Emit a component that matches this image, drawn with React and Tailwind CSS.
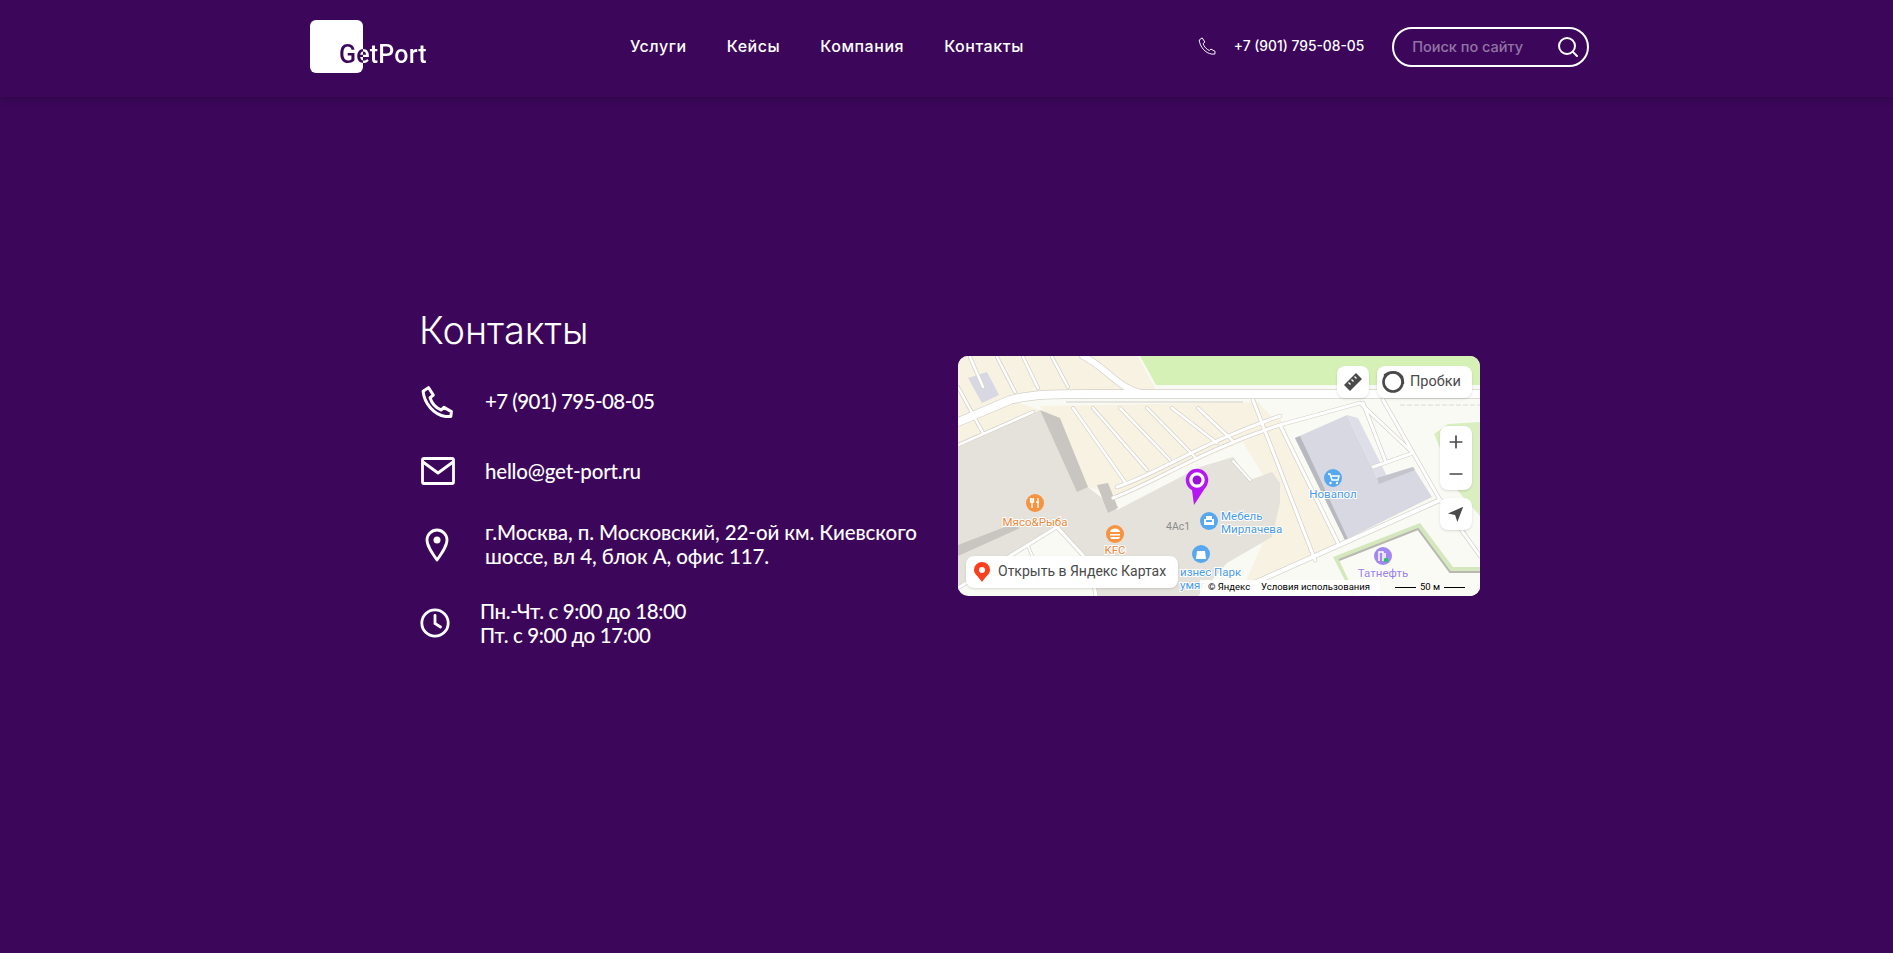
import React from 'react';
import { Search, Plus, Minus } from 'lucide-react';

const navLinks = ['Услуги', 'Кейсы', 'Компания', 'Контакты'];

// дороги: [путь, толщина]
const roads = [
  ['M0 66 L52 44 C75 38 100 38 130 38 L522 38', 8],
  ['M125 0 C150 12 160 35 190 38', 6],
  ['M0 89 L75 56', 2.5],
  ['M155 142 C200 125 242 95 322 69 L402 47 L455 97 L415 111', 3],
  ['M159 131 C200 118 240 88 322 60', 3],
  ['M0 232 L99 171 L132 207 L138 240', 3],
  ['M115 52 L167 126', 2.5],
  ['M135 52 L189 114', 2.5],
  ['M162 52 L212 104', 2.5],
  ['M189 52 L237 101', 2.5],
  ['M214 52 L259 87', 2.5],
  ['M240 52 L275 85', 2.5],
  ['M295 44 L357 204', 3],
  ['M322 69 L380 187', 3],
  ['M405 47 L427 104', 3],
  ['M425 44 L482 144 L522 200', 3],
  ['M285 232 L482 144', 4],
  ['M12 1 L25 31', 2.5],
  ['M39 1 L57 36', 2.5],
  ['M65 1 L80 32', 2.5],
  ['M94 1 L110 31', 2.5],
  ['M0 31 L25 77', 2.5],
  ['M70 190 L85 225', 2],
  ['M275 105 L292 124', 2],
];

const PhoneIcon = ({ className, width = 2 }) => (
  <svg viewBox="0 0 30 30" className={className} fill="none" stroke="white" strokeWidth={width} strokeLinejoin="round">
    <path d="M2 5 L7 1.5 L11.5 8.5 L8.5 11 C10 16 14 20.5 19 22.5 L21.5 20 L28.5 24 L28 28.5 L23 28.5 C12 27 3 16 2 5 Z" />
  </svg>
);

const MapArt = () => (
  <svg viewBox="0 0 522 240" className="absolute inset-0 w-full h-full">
    <rect width="522" height="240" fill="#fafaf4" />
    {/* кварталы */}
    <path d="M0 0 L180 0 L200 38 L52 44 L0 66 Z" fill="#f8f2e2" />
    <path d="M0 66 L52 44 L82 54 L0 91 Z" fill="#f8f2e2" />
    <path d="M82 50 L300 46 L322 69 L160 140 L130 131 Z" fill="#f8f2e2" />
    <path d="M275 70 L322 62 L382 190 L285 232 L322 147 Z" fill="#f8f2e2" />
    {/* зелень */}
    <path d="M182 0 L198 29 L522 29 L522 0 Z" fill="#d5f1b5" />
    <path d="M476 78 L490 68 L522 66 L522 160 L500 135 Z" fill="#d9efc0" />
    <path d="M375 201 L462 167 L495 211 L522 211 L522 240 L395 240 Z" fill="#d5e8bd" />
    <path d="M381 204 L460 173 L492 216 L522 216 L522 240 L398 240 Z" fill="#fbfbf5" />
    <path d="M381 204 L460 173 L492 216 L522 216" fill="none" stroke="#b9b7b2" strokeWidth="2" />
    {/* здания */}
    <path d="M0 91 L82 54 L130 131 L159 154 L242 111 L275 101 L292 124 L314 116 L322 127 L322 147 L314 181 L269 207 L240 240 L138 240 L132 207 L99 171 L0 232 Z" fill="#e5e2db" />
    <path d="M82 54 L102 62 L130 131 L119 136 Z" fill="#c9c6c1" />
    <path d="M139 129 L150 127 L160 152 L150 157 Z" fill="#c9c6c1" />
    <path d="M0 189 L52 169 L62 172 L0 200 Z" fill="#c9c6c1" />
    <path d="M337 82 L389 59 L419 122 L455 111 L474 141 L387 184 Z" fill="#d8d8e2" />
    <path d="M389 59 L400 62 L430 122 L419 122 Z" fill="#dedee8" />
    <path d="M337 82 L342 80 L390 183 L387 184 Z" fill="#b8b8bf" />
    <path d="M419 122 L455 111 L457 114 L421 128 Z" fill="#c4c4cc" />
    <path d="M10 22 L29 16 L41 39 L24 47 Z" fill="#d8d8e2" />
    {/* дороги: сначала контур, потом заливка */}
    <g fill="none" strokeLinecap="round" strokeLinejoin="round">
      {roads.map(([d, w]) => (
        <path key={d} d={d} stroke="#d3d1c9" strokeWidth={w + 1.4} />
      ))}
      {roads.map(([d, w]) => (
        <path key={d} d={d} stroke="#ffffff" strokeWidth={w} />
      ))}
    </g>
    <path d="M108 46 L285 46" stroke="#d0cfca" strokeWidth="1" />
    <path d="M442 49 L522 49" stroke="#dcdad3" strokeWidth="1" strokeDasharray="5 2" />
    {/* метка */}
    <path d="M234 134 L236 149 L249 129 Z" fill="#b517f2" />
    <circle cx="239" cy="124" r="9.5" fill="#ffffff" stroke="#b517f2" strokeWidth="3.5" />
    <circle cx="239" cy="124" r="4.5" fill="#9a10d6" />
    {/* точки */}
    <circle cx="77" cy="147" r="9" fill="#f59340" />
    <path d="M74 142 V152 M80 142 V152 M72.5 142 V146 H75.5 V142 M78 146 H81" stroke="#fff" strokeWidth="1.3" fill="none" />
    <circle cx="157" cy="178" r="9" fill="#f59340" />
    <path d="M152 176 a5 3.5 0 0 1 10 0 Z M152 178 H162 V179.5 H152 Z M152 181 H162 L161 183 H153 Z" fill="#fff" />
    <circle cx="251" cy="165" r="9" fill="#57a8ee" />
    <path d="M246 163 h2 v3 h6 v-3 h2 v6 h-10 Z M248 160 h6 v4 h-6 Z" fill="#fff" />
    <circle cx="243" cy="198" r="9" fill="#57a8ee" />
    <path d="M239 195 h8 l1 8 h-10 Z" fill="#fff" />
    <circle cx="375" cy="122" r="9" fill="#57a8ee" />
    <path d="M370 118 h2 l2 6 h6 l1 -4 h-8" fill="none" stroke="#fff" strokeWidth="1.5" />
    <circle cx="372.5" cy="127" r="1.2" fill="#fff" />
    <circle cx="379" cy="127" r="1.2" fill="#fff" />
    <circle cx="425" cy="200" r="9" fill="#a488f2" />
    <path d="M421 205 v-9 h4 v9 M427 203 v-6" stroke="#fff" strokeWidth="1.5" fill="none" />
    <circle cx="428" cy="204" r="2.2" fill="#22c55e" />
    {/* подписи */}
    <g fontFamily="Roboto, sans-serif" fontSize="11.5" stroke="#ffffff" strokeWidth="2" paintOrder="stroke">
      <text x="77" y="170" textAnchor="middle" fill="#e98a3c">Мясо&amp;Рыба</text>
      <text x="157" y="198" textAnchor="middle" fill="#e98a3c">KFC</text>
      <text x="208" y="174" fill="#8c8c8c" stroke="none" fontSize="10.5">4Ас1</text>
      <text x="263" y="164" fill="#4c9be8">Мебель</text>
      <text x="263" y="177" fill="#4c9be8">Мирлачева</text>
      <text x="222" y="220" fill="#4c9be8">изнес Парк</text>
      <text x="222" y="233" fill="#4c9be8">умяг</text>
      <text x="375" y="142" textAnchor="middle" fill="#4c9be8">Новапол</text>
      <text x="425" y="221" textAnchor="middle" fill="#9a80ec">Татнефть</text>
    </g>
  </svg>
);

const YandexMap = () => (
  <div className="relative w-[522px] h-[240px] -mt-[2px] rounded-[10px] overflow-hidden shrink-0 font-['Roboto',sans-serif]">
    <MapArt />

    {/* верхние кнопки */}
    <div className="absolute top-[10px] right-2 flex gap-2">
      <div className="w-8 h-8 bg-white rounded-lg shadow-sm flex items-center justify-center">
        <svg viewBox="0 0 20 20" className="w-5 h-5">
          <path d="M1 13 L13 1 L19 7 L7 19 Z" fill="#4a4a4a" />
          <path d="M5.5 10.5 L7.5 12.5 M8.5 7.5 L10.5 9.5 M11.5 4.5 L13.5 6.5" stroke="#fff" strokeWidth="1.3" />
        </svg>
      </div>
      <div className="h-8 w-[95px] bg-white rounded-lg shadow-sm flex items-center pl-1 gap-[5px] text-[14.5px] text-[#4a4a4a]">
        <svg viewBox="0 0 24 24" className="w-6 h-6">
          <circle cx="12" cy="12" r="9.5" fill="none" stroke="#4a4a4a" strokeWidth="2.6" />
          <path d="M4 5 C9 1 17 1 21 7 L22 13" fill="none" stroke="#4a4a4a" strokeWidth="2.6" strokeLinecap="round" />
        </svg>
        Пробки
      </div>
    </div>

    {/* зум и геолокация */}
    <div className="absolute top-[70px] right-2 flex flex-col gap-2">
      <div className="w-8 h-16 bg-white rounded-lg shadow-sm flex flex-col items-center justify-center gap-3 text-[#4a4a4a]">
        <Plus size={20} strokeWidth={2} />
        <Minus size={20} strokeWidth={2} />
      </div>
      <div className="w-8 h-8 bg-white rounded-lg shadow-sm flex items-center justify-center">
        <svg viewBox="0 0 20 20" className="w-[18px] h-[18px]">
          <path d="M18 2 L1 9.5 L9 11 L11.5 19 Z" fill="#4a4a4a" />
        </svg>
      </div>
    </div>

    {/* открыть в картах */}
    <div className="absolute left-2 top-[200px] w-[212px] h-8 bg-white rounded-lg shadow-sm flex items-center pl-[7px] gap-[7px] text-[14px] text-[#4a4a4a] whitespace-nowrap">
      <svg viewBox="0 0 18 22" className="w-[18px] h-[22px] shrink-0">
        <path d="M9 1 a8 8 0 0 1 8 8 c0 4 -4 6 -8 12 c-4 -6 -8 -8 -8 -12 a8 8 0 0 1 8 -8 Z" fill="#fc3f1d" />
        <circle cx="9" cy="9" r="3" fill="#fff" />
      </svg>
      Открыть в Яндекс Картах
    </div>

    {/* копирайт */}
    <div className="absolute left-[242px] bottom-0 w-[180px] h-4 bg-white/85 flex items-center pl-2 text-[9.5px] text-black whitespace-nowrap">
      <span className="w-[53px]">© Яндекс</span>
      <span>Условия использования</span>
    </div>
    <div className="absolute left-[437px] bottom-0 w-[70px] h-4 flex items-center gap-1 text-[9.5px] text-black">
      <span className="h-px flex-1 bg-black" />
      50 м
      <span className="h-px flex-1 bg-black" />
    </div>
  </div>
);

const ContactRow = ({ icon, textClass, children, rowClass }) => (
  <div className={`flex items-center ${rowClass}`}>
    {icon}
    <div className={`font-['Lato',sans-serif] font-medium text-[20.5px] leading-6 text-white ${textClass}`}>{children}</div>
  </div>
);

const App = () => {
  return (
    <div className="min-h-screen bg-[#3c075b] font-['Inter',sans-serif] text-white">
      {/* Header */}
      <header className="h-[97px] pl-[310px] pb-[5px] flex items-center shadow-[0_3px_6px_rgba(0,0,0,0.2)]">
        <div className="relative w-[116px] h-[53px] shrink-0">
          <div className="w-[53px] h-[53px] bg-white rounded-[6px]" />
          {/* граница цвета совпадает с краем белого квадрата */}
          <span className="absolute left-[29px] top-[21px] font-['Roboto',sans-serif] font-medium text-[25px] leading-7 tracking-[0.2px] whitespace-nowrap text-transparent bg-clip-text bg-[linear-gradient(90deg,#3c075b_24px,#ffffff_24px)]">
            GetPort
          </span>
        </div>

        <nav className="flex gap-10 ml-[204px] text-[16px] font-medium tracking-[0.55px]">
          {navLinks.map((link) => (
            <a key={link} className="whitespace-nowrap">{link}</a>
          ))}
        </nav>

        <div className="flex items-center ml-[174px]">
          <PhoneIcon className="w-[18px] h-[18px]" width={1.6} />
          <span className="ml-[18px] text-[13.8px] font-medium whitespace-nowrap">+7 (901) 795-08-05</span>
        </div>

        <div className="ml-[28px] mt-[2px] w-[197px] h-10 border-2 border-white rounded-[20px] flex items-center pl-[18px] pr-[7px] justify-between">
          <span className="text-[14.5px] font-medium text-white/45 whitespace-nowrap">Поиск по сайту</span>
          <Search size={24} strokeWidth={2} />
        </div>
      </header>

      {/* Contacts */}
      <main className="pl-[419px] pt-[209px] flex items-center">
        <div className="w-[539px] shrink-0">
          <h1 className="text-[38px] leading-[48px] font-light">Контакты</h1>

          <ContactRow
            rowClass="mt-[28px] h-[40px] pl-[2px]"
            textClass="ml-[32px] pb-[2px] tracking-[-0.55px]"
            icon={<PhoneIcon className="w-[32px] h-[32px]" width={2.8} />}
          >
            +7 (901) 795-08-05
          </ContactRow>

          <ContactRow
            rowClass="mt-[29px] h-[40px] pl-[2px]"
            textClass="ml-[30px] tracking-[-0.2px]"
            icon={
              <svg viewBox="0 0 34 28" className="w-[34px] h-[28px]" fill="none" stroke="white" strokeWidth="2.8" strokeLinejoin="round">
                <rect x="1.5" y="1.5" width="31" height="25" rx="1.5" />
                <path d="M2 5 L17 16 L32 5" />
              </svg>
            }
          >
            hello@get-port.ru
          </ContactRow>

          <ContactRow
            rowClass="mt-[30px] h-[48px]"
            textClass="ml-[36px] pb-[2px] tracking-[-0.08px] whitespace-nowrap"
            icon={
              <svg viewBox="0 0 24 34" className="ml-[6px] w-[24px] h-[34px]" fill="none" stroke="white" strokeWidth="2.8">
                <path d="M12 32 C7 25 2 18 2 12 a10 10 0 0 1 20 0 C22 18 17 25 12 32 Z" strokeLinejoin="round" />
                <circle cx="12" cy="12" r="3.5" fill="white" stroke="none" />
              </svg>
            }
          >
            г.Москва, п. Московский, 22-ой км. Киевского
            <br />
            шоссе, вл 4, блок А, офис 117.
          </ContactRow>

          <ContactRow
            rowClass="mt-[30px] h-[48px] pl-px"
            textClass="ml-[30px] tracking-[-0.37px] whitespace-nowrap"
            icon={
              <svg viewBox="0 0 30 30" className="w-[30px] h-[30px]" fill="none" stroke="white" strokeWidth="2.8" strokeLinecap="round">
                <circle cx="15" cy="15" r="13.2" />
                <path d="M15 7.5 V15.5 L20.5 19" />
              </svg>
            }
          >
            Пн.-Чт. с 9:00 до 18:00
            <br />
            Пт. с 9:00 до 17:00
          </ContactRow>
        </div>

        <YandexMap />
      </main>
    </div>
  );
};

export default App;
